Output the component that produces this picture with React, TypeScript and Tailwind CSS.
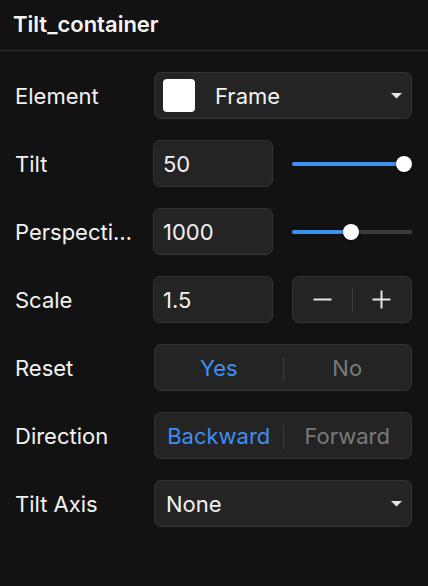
import React from "react";

const font = { fontFamily: "Inter, 'Noto Sans', sans-serif" };

function Caret() {
  return (
    <svg width="11" height="6" viewBox="0 0 11 6" className="shrink-0">
      <path d="M0 0 L11 0 L5.5 5.5 Z" fill="#e6e6e6" />
    </svg>
  );
}

function Box({ children, className = "" }: { children?: React.ReactNode; className?: string }) {
  return (
    <div
      className={`h-[47px] rounded-[7px] border border-[#333333] bg-[#242424] flex items-center ${className}`}
    >
      {children}
    </div>
  );
}

function Slider({ pct }: { pct: number }) {
  return (
    <div className="relative h-[47px] flex items-center">
      <div className="relative w-full h-[4px] rounded-full bg-[#3c3c3c]">
        <div className="absolute left-0 top-0 h-[4px] rounded-full bg-[#3d8ff0]" style={{ width: `${pct}%` }} />
        <div
          className="absolute top-1/2 w-[16px] h-[16px] rounded-full bg-white -translate-y-1/2 -translate-x-1/2 shadow-[0_1px_3px_rgba(0,0,0,0.6)]"
          style={{ left: `${pct}%` }}
        />
      </div>
    </div>
  );
}

function Row({ label, children }: { label: string; children: React.ReactNode }) {
  return (
    <div className="flex items-center h-[47px]">
      <div className="w-[138px] shrink-0 flex pt-[2px]">
        <div className="max-w-[119px] text-[22px] text-[#f2f2f2] whitespace-nowrap overflow-hidden text-ellipsis">
          {label}
        </div>
      </div>
      <div className="flex-1 min-w-0">{children}</div>
    </div>
  );
}

function Segmented({ a, b }: { a: string; b: string }) {
  return (
    <Box className="px-0 pt-[2px]">
      <div className="flex-1 text-center text-[22px] text-[#3d8ff0]">{a}</div>
      <div className="w-px h-[24px] bg-[#3a3a3a]" />
      <div className="flex-1 text-center text-[22px] text-[#7a7a7a]">{b}</div>
    </Box>
  );
}

export default function App() {
  return (
    <div className="w-[428px] h-[586px] bg-[#121212] overflow-hidden" style={font}>
      <div className="h-[51px] border-b border-[#2e2e2e] flex items-center px-[13px] pb-[1px]">
        <span className="text-[22px] font-semibold text-[#f5f5f5]">Tilt_container</span>
      </div>
      <div className="pl-[15px] pr-[16px] pt-[21px] flex flex-col gap-[21px]">
        <Row label="Element">
          <Box className="pl-[8px] pr-[9px] ml-[1px]">
            <div className="w-[32px] h-[33px] rounded-[4px] bg-white shrink-0" />
            <span className="ml-[20px] flex-1 text-[22px] text-[#f2f2f2] pt-[2px]">Frame</span>
            <Caret />
          </Box>
        </Row>
        <Row label="Tilt">
          <div className="grid grid-cols-2 gap-[19px]">
            <Box className="px-[9px] pt-[2px]">
              <span className="text-[22px] text-[#f2f2f2]">50</span>
            </Box>
            <Slider pct={93} />
          </div>
        </Row>
        <Row label="Perspective">
          <div className="grid grid-cols-2 gap-[19px]">
            <Box className="px-[9px] pt-[2px]">
              <span className="text-[22px] text-[#f2f2f2]">1000</span>
            </Box>
            <Slider pct={49} />
          </div>
        </Row>
        <Row label="Scale">
          <div className="grid grid-cols-2 gap-[19px]">
            <Box className="px-[9px] pt-[2px]">
              <span className="text-[22px] text-[#f2f2f2]">1.5</span>
            </Box>
            <Box>
              <div className="flex-1 flex justify-center">
                <svg width="19" height="19" viewBox="0 0 19 19">
                  <path d="M0.5 9.5 H18.5" stroke="#e6e6e6" strokeWidth="2" />
                </svg>
              </div>
              <div className="w-px h-[24px] bg-[#3a3a3a]" />
              <div className="flex-1 flex justify-center">
                <svg width="19" height="19" viewBox="0 0 19 19">
                  <path d="M0.5 9.5 H18.5 M9.5 0.5 V18.5" stroke="#e6e6e6" strokeWidth="2" />
                </svg>
              </div>
            </Box>
          </div>
        </Row>
        <Row label="Reset">
          <div className="ml-[1px]">
            <Segmented a="Yes" b="No" />
          </div>
        </Row>
        <Row label="Direction">
          <div className="ml-[1px]">
            <Segmented a="Backward" b="Forward" />
          </div>
        </Row>
        <Row label="Tilt Axis">
          <Box className="pl-[11px] pr-[9px] ml-[1px]">
            <span className="flex-1 text-[22px] text-[#f2f2f2] pt-[2px]">None</span>
            <Caret />
          </Box>
        </Row>
      </div>
    </div>
  );
}
